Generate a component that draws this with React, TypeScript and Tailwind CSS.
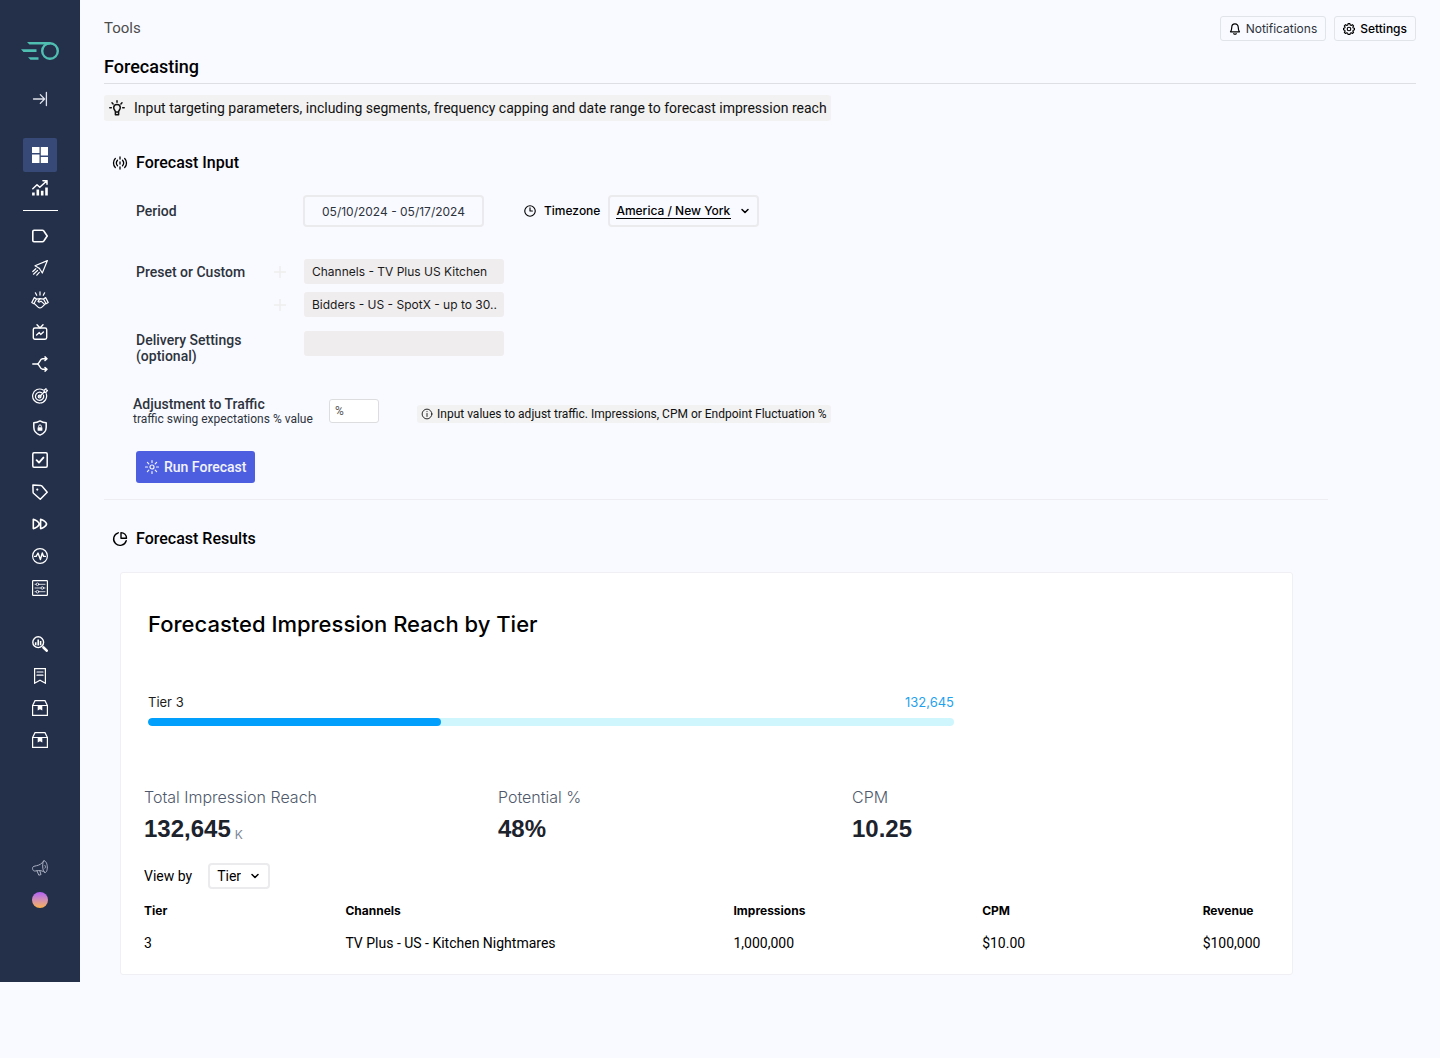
import { useState } from 'react'
import type { ReactNode } from 'react'
import { ChevronDown } from 'lucide-react'

function Icon({ size = 16, stroke = 1.2, children }: { size?: number; stroke?: number; children: ReactNode }) {
  return (
    <svg
      width={size}
      height={size}
      viewBox="0 0 16 16"
      fill="none"
      stroke="currentColor"
      strokeWidth={stroke}
      strokeLinecap="round"
      strokeLinejoin="round"
      aria-hidden="true"
      className="shrink-0"
    >
      {children}
    </svg>
  )
}

function BoxIcon() {
  return (
    <Icon>
      <path d="M.6 5.5v9.9h14.8V5.5H.6zM.6 5.5 3 .7h10l2.4 4.8" strokeLinejoin="miter" />
      <path d="M5.7 5.5h4.6v5L8 9.3l-2.3 1.2z" fill="currentColor" stroke="none" />
    </Icon>
  )
}

const mainItems = [
  {
    name: 'Labels',
    icon: (
      <Icon stroke={1.6}>
        <path d="M2 2.3h8.4c.6 0 1 .2 1.4.7L15.2 8l-3.4 5c-.4.5-.8.7-1.4.7H2c-.7 0-1.2-.5-1.2-1.2v-9c0-.7.5-1.2 1.2-1.2z" />
      </Icon>
    ),
  },
  {
    name: 'Campaigns',
    icon: (
      <Icon>
        <path d="M15.4.6 3 5.700l3.700 2.200c.6.3 1 .8 1.300 1.400l2.300 3.700zM3.800 8.700.8 11.500M5.500 10.500l-4 3.700M7.300 12.400l-2.500 2.800" />
      </Icon>
    ),
  },
  {
    name: 'Deals',
    icon: (
      <Icon size={18} stroke={1.1}>
        <path d="M8 .7v2.900M3.900 1.600l1.200 2.200M12.100 1.600l-1.200 2.200M3 5.900.7 10.200l1.800 1.100 2.400-4.200zM13 5.900l2.300 4.300-1.800 1.100-2.400-4.200zM4.900 7.200 8 6.700l3.100.5M3 11.200l3.300 3.100c1 .9 2.400.9 3.400 0l3.300-3.100M8 6.900 6.200 9.200c.8.9 1.800.6 2.700-.2l3 2.700" />
      </Icon>
    ),
  },
  {
    name: 'Channels',
    icon: (
      <Icon stroke={1.4}>
        <rect x="1.3" y="4" width="13.4" height="11.2" rx="1.6" />
        <path d="M5 .8 8 4l3-3.2M4.600 11l2.700-2.400 1.400 1.800 2.700-2.400" />
      </Icon>
    ),
  },
  {
    name: 'Routing',
    icon: (
      <Icon stroke={1.5}>
        <path d="M.8 8h4.4c2.6 0 2.4-5.3 5.4-5.3h4M5.2 8c2.6 0 2.4 5.3 5.4 5.3h4M13 .9l2 1.8-2 1.8M13 11.5l2 1.8-2 1.8" />
      </Icon>
    ),
  },
  {
    name: 'Targeting',
    icon: (
      <Icon>
        <path d="M11.2 2A7 7 0 1 0 14.2 5.6M9.7 4.8a4.1 4.1 0 1 0 1.8 2.3" />
        <circle cx="7.6" cy="8.6" r="1.4" />
        <path d="m7.7 8.5 5-5M12 4.1l.1-2L14 .6l.2 1.6 1.4.2L14 4.3z" />
      </Icon>
    ),
  },
  {
    name: 'Security',
    icon: (
      <Icon stroke={1.5}>
        <path d="M8 .9c1.9 1.2 4 1.8 6.2 1.9v4.4c0 3.700-2.600 6.500-6.200 7.900-3.600-1.400-6.200-4.200-6.200-7.900V2.800C4 2.700 6.100 2.100 8 .9z" />
        <rect x="5.6" y="7.2" width="4.8" height="3.5" rx=".5" fill="currentColor" stroke="none" />
        <path d="M6.700 7V6.200a1.300 1.300 0 0 1 2.600 0V7" strokeWidth="1" />
      </Icon>
    ),
  },
  {
    name: 'Approvals',
    icon: (
      <Icon stroke={1.5}>
        <rect x=".8" y=".8" width="14.4" height="14.4" rx="1.2" />
        <path d="m4.6 8.2 2.400 2.400 4.400-5" strokeWidth="1.9" />
      </Icon>
    ),
  },
  {
    name: 'Tags',
    icon: (
      <Icon stroke={1.5}>
        <path d="m.9 1 8 .5c.4 0 .7.2 1 .5L15.2 8.200 8.300 15.200 1.500 9.200c-.3-.3-.4-.5-.4-.9z" />
        <circle cx="5.3" cy="5.6" r="1.1" fill="currentColor" stroke="none" />
      </Icon>
    ),
  },
  {
    name: 'Pacing',
    icon: (
      <Icon stroke={1.6}>
        <path d="M1.300 3.400v9.200c2.500-.4 5.700-2.800 6-4.600-.3-1.800-3.500-4.200-6-4.600zM8.600 3.400v9.200c2.500-.4 5.700-2.800 6-4.600-.3-1.800-3.500-4.200-6-4.600z" />
      </Icon>
    ),
  },
  {
    name: 'Activity',
    icon: (
      <Icon>
        <circle cx="8" cy="8" r="7.4" />
        <path d="M2.600 8.400h1.600L6 5l2.400 6.500L10.300 5l1.300 3.400h1.800" strokeWidth="1.4" />
      </Icon>
    ),
  },
  {
    name: 'Controls',
    icon: (
      <Icon>
        <rect x=".6" y=".6" width="14.8" height="14.8" rx=".6" />
        <g strokeWidth=".8">
          <path d="M3 4.300h1M7 4.300h6M3 8h5.800M11.800 8H13M3 11.700h1M7 11.700h6" />
          <circle cx="5.5" cy="4.3" r="1.3" />
          <circle cx="10.3" cy="8" r="1.3" />
          <circle cx="5.5" cy="11.7" r="1.3" />
        </g>
      </Icon>
    ),
  },
]

const toolItems = [
  {
    name: 'Insights',
    icon: (
      <Icon stroke={1.4}>
        <circle cx="6.2" cy="6.2" r="5.4" />
        <path d="M3.700 6.200v3M6.200 3.600v6M8.600 5v4.200" strokeWidth="1.6" strokeLinecap="butt" />
        <path d="m11.500 11.500 3.200 3.200" strokeWidth="2.6" />
      </Icon>
    ),
  },
  {
    name: 'Bookmarks',
    icon: (
      <Icon>
        <path d="M2.600.6h10.800v14.600L8 12.200l-5.400 3z" strokeLinejoin="miter" />
        <path d="M5 4h6M5 7.200h6" />
      </Icon>
    ),
  },
  { name: 'Inventory', icon: <BoxIcon /> },
  { name: 'Packages', icon: <BoxIcon /> },
]

function NavLink({ name, children }: { name: string; children: ReactNode }) {
  return (
    <a href="#" aria-label={name} className="flex h-8 w-8 items-center justify-center">
      {children}
    </a>
  )
}

function Sidebar() {
  return (
    <nav aria-label="Main" className="flex w-20 shrink-0 flex-col items-center bg-[#242f4a] pt-[35px] pb-[66px] text-white">
      <a href="#" aria-label="Home" className="flex h-8 items-center text-[#4fbfb2]">
        <svg width="38" height="20" viewBox="0 0 38 20" fill="currentColor" aria-hidden="true">
          <circle cx="29" cy="10" r="7.8" fill="none" stroke="currentColor" strokeWidth="2.4" />
          <path d="M6 1h23v2.400H8.500zM0 8.300h15.500v2.600H2.500zM7 16.200h10.500v2.600h-8z" />
        </svg>
      </a>
      <button type="button" aria-label="Expand menu" className="mt-4 flex h-8 w-8 items-center justify-center text-[#dfe2ea]">
        <Icon stroke={1.3}>
          <path d="M1.500 8h11M8.300 3.600 12.600 8l-4.300 4.400M14.400 1.500v13" />
        </Icon>
      </button>

      <a
        href="#"
        aria-label="Dashboard"
        className="mt-[23px] flex h-[34px] w-[34px] items-center justify-center rounded-xs bg-[#364977]"
      >
        <svg width="16" height="16" viewBox="0 0 16 16" fill="currentColor" aria-hidden="true">
          <path d="M0 0h7.500v6H0zM0 7.500h7.500V16H0zM8.800 0H16v8.500H8.800zM8.800 10H16v6H8.800z" />
        </svg>
      </a>
      <NavLink name="Analytics">
        <Icon>
          <path d="m.8 8.700 4.200-4 2.800 2.600 6.600-6M11 .7h4v3.600" strokeWidth="1.5" />
          <path d="M1.400 12.600v3M5.800 9.600v6M10.200 10.800v4.800M14.500 7.400v8.200" strokeWidth="2.6" strokeLinecap="butt" />
        </Icon>
      </NavLink>
      <hr className="mt-1.5 mb-[9px] w-[35px] border-white" />

      {mainItems.map((item) => (
        <NavLink key={item.name} name={item.name}>
          {item.icon}
        </NavLink>
      ))}

      <div className="mt-6">
        {toolItems.map((item) => (
          <NavLink key={item.name} name={item.name}>
            {item.icon}
          </NavLink>
        ))}
      </div>

      <div className="mt-24 text-[#aab1c2]">
        <NavLink name="Announcements">
          <Icon stroke={1}>
            <path d="M11.800.9c1.500-.8 3.400 2.300 3.500 6 .1 3.600-1 6-2.400 5.500C11.500 11.900 10.600 9 10.700 6c0-2.500.3-4.600 1.100-5.100zM11.600 1.100C9.800 3.800 7.500 5.100 4.500 5.700L2 6.300C.6 6.700.3 8 .7 9.300c.3 1.300 1.200 1.900 2.500 1.700l3-.4c2.500-.2 4.800.4 6.700 1.800M5 10.900l1.800 4.300 2.200-.6-1.200-3.800M12.800 5.300c.9.600 1 2.200.2 2.900" />
          </Icon>
        </NavLink>
        <button type="button" aria-label="Account" className="flex h-8 w-8 items-center justify-center">
          <span className="h-4 w-4 rounded-full bg-linear-to-b from-[#b45cf5] to-[#fbb040]" />
        </button>
      </div>
    </nav>
  )
}

const inputFont = "font-['Inter',sans-serif] text-xs"

function AddButton({ label }: { label: string }) {
  return (
    <button type="button" aria-label={label} className="mr-[18px] text-[#eeeeee]">
      <Icon size={12} stroke={2}>
        <path d="M8 0v16M0 8h16" strokeLinecap="butt" />
      </Icon>
    </button>
  )
}

function ForecastForm() {
  const [period, setPeriod] = useState('05/10/2024 - 05/17/2024')
  const [traffic, setTraffic] = useState('')

  return (
    <form onSubmit={(e) => e.preventDefault()} className="pl-8 text-[#2d333d]">
      <div className="flex items-center">
        <label htmlFor="period" className="w-[167px] text-sm font-medium">
          Period
        </label>
        <input
          id="period"
          value={period}
          onChange={(e) => setPeriod(e.target.value)}
          className={`${inputFont} h-8 w-[181px] rounded-sm border-2 border-[#ebebed] text-center`}
        />
        <label htmlFor="timezone" className="ml-10 flex items-center gap-2 font-['Inter',sans-serif] text-xs font-medium text-black">
          <Icon size={12} stroke={1.5}>
            <circle cx="8" cy="8" r="7" />
            <path d="M8 3.800V8h3.200" />
          </Icon>
          Timezone
        </label>
        <div className="ml-2 flex h-8 items-center gap-2 rounded-sm border-2 border-[#ebebed] px-1.5 text-black">
          <select
            id="timezone"
            className="w-[115px] appearance-none border-b border-black font-['Inter',sans-serif] text-xs leading-[14px] font-medium"
          >
            <option>America / New York</option>
            <option>America / Chicago</option>
          </select>
          <ChevronDown size={12} strokeWidth={3} aria-hidden="true" />
        </div>
      </div>

      <div className="mt-8 flex items-center">
        <label htmlFor="preset" className="w-[138px] text-sm font-medium">
          Preset or Custom
        </label>
        <AddButton label="Add channel" />
        <input
          id="preset"
          defaultValue="Channels - TV Plus US Kitchen"
          className={`${inputFont} h-[25px] w-[200px] rounded-[3px] bg-[#f0edee] px-2 text-[#1a1a1a]`}
        />
      </div>
      <div className="mt-2 flex items-center pl-[138px]">
        <AddButton label="Add bidder" />
        <input
          aria-label="Bidders"
          defaultValue="Bidders - US - SpotX - up to 30.."
          className={`${inputFont} h-[25px] w-[200px] rounded-[3px] bg-[#f0edee] pl-2 text-[#1a1a1a]`}
        />
      </div>
      <div className="mt-[14px] flex">
        <label htmlFor="delivery" className="mt-px w-[168px] text-sm leading-4 font-medium">
          Delivery Settings
          <br />
          (optional)
        </label>
        <input id="delivery" className={`${inputFont} h-[25px] w-[200px] rounded-[3px] bg-[#f0edee] px-2`} />
      </div>

      <div className="-ml-[3px] mt-8 flex items-start">
        <label htmlFor="traffic" className="w-[196px]">
          <span className="block text-sm leading-4 font-medium">Adjustment to Traffic</span>
          <span className="block text-xs leading-[14px]">traffic swing expectations % value</span>
        </label>
        <input
          id="traffic"
          value={traffic}
          placeholder="%"
          onChange={(e) => setTraffic(e.target.value)}
          className="mt-[3px] h-6 w-[50px] rounded-[3px] border border-[#dddddf] bg-white px-[5px] text-xs placeholder:text-[#555555]"
        />
        <p className="mt-[9px] ml-[38px] flex h-[18px] items-center gap-1 rounded-[3px] bg-[#f2f2f2] px-1 text-xs text-[#111111]">
          <Icon size={12}>
            <circle cx="8" cy="8" r="6.5" />
            <path d="M8 7.300v4M8 4.700v.2" />
          </Icon>
          Input values to adjust traffic. Impressions, CPM or Endpoint Fluctuation %
        </p>
      </div>

      <button
        type="submit"
        className="mt-[25px] flex h-8 items-center gap-1 rounded-[3px] bg-[#4d5fe0] pr-[9px] pl-2 text-sm font-medium text-[#f3f3fb]"
      >
        <Icon stroke={1.2}>
          <circle cx="8" cy="8" r="2" />
          <path d="M8 1.500v2M8 12.500v2M1.500 8h2M12.500 8h2M3.400 3.400l1.400 1.400M11.200 11.200l1.400 1.400M3.400 12.600l1.400-1.400M11.200 4.800l1.400-1.400" />
        </Icon>
        Run Forecast
      </button>
    </form>
  )
}

const stats = [
  { label: 'Total Impression Reach', value: '132,645', unit: 'K' },
  { label: 'Potential %', value: '48%' },
  { label: 'CPM', value: '10.25' },
]

const rows = [
  { tier: '3', channels: 'TV Plus - US - Kitchen Nightmares', impressions: '1,000,000', cpm: '$10.00', revenue: '$100,000' },
]

function Results() {
  const progress = 36.4

  return (
    <section className="mt-[21px] mr-[123px] ml-4 rounded-[3px] border border-[#f0f0f4] bg-white px-[23px] pt-[35px] pb-[15px]">
      <h3 className="ml-1 font-['Inter',sans-serif] text-[22px] leading-8 font-medium text-black">
        Forecasted Impression Reach by Tier
      </h3>

      <div className="mt-[52px] ml-1 max-w-[806px] font-['Inter',sans-serif] text-[13px]">
        <div className="flex justify-between leading-5">
          <span className="text-[#1c1c1c]">Tier 3</span>
          <span className="text-[#1fa2ee]">132,645</span>
        </div>
        <div className="mt-1.5 h-2 overflow-hidden rounded-full bg-[#cff6fd]">
          <div className="h-full rounded-full bg-[#02a0fc]" style={{ width: `${progress}%` }} />
        </div>
      </div>

      <dl className="mt-[59px] grid max-w-[1062px] grid-cols-3">
        {stats.map((stat) => (
          <div key={stat.label}>
            <dt className="font-['Inter',sans-serif] text-base font-light text-[#4f596b]">{stat.label}</dt>
            <dd className="mt-1 flex items-center gap-1 font-['Liberation_Sans',sans-serif] text-2xl leading-8 font-bold text-[#1d232c]">
              {stat.value}
              {stat.unit && (
                <span className="pt-3 font-['Inter',sans-serif] text-xs leading-4 font-normal text-[#7d8696]">{stat.unit}</span>
              )}
            </dd>
          </div>
        ))}
      </dl>

      <div className="mt-[18px] flex items-center gap-4 text-sm text-black">
        <label htmlFor="view-by">View by</label>
        <div className="flex h-[26px] items-center gap-2 rounded-sm border-2 border-[#ebebed] px-[7px]">
          <select id="view-by" className="w-6 appearance-none">
            <option>Tier</option>
            <option>CPM</option>
          </select>
          <ChevronDown size={12} strokeWidth={3} aria-hidden="true" />
        </div>
      </div>

      <table className="mt-1.5 w-full table-fixed text-left text-black">
        <thead className="font-['Inter',sans-serif] text-xs">
          <tr className="h-8">
            <th className="w-[17.9%] font-bold">Tier</th>
            <th className="w-[34.5%] font-bold">Channels</th>
            <th className="w-[22.1%] font-bold">Impressions</th>
            <th className="w-[19.6%] font-bold">CPM</th>
            <th className="font-bold">Revenue</th>
          </tr>
        </thead>
        <tbody className="text-sm">
          {rows.map((row) => (
            <tr key={row.tier} className="h-8">
              <td className="p-0">{row.tier}</td>
              <td className="p-0">{row.channels}</td>
              <td className="p-0">{row.impressions}</td>
              <td className="p-0">{row.cpm}</td>
              <td className="p-0">{row.revenue}</td>
            </tr>
          ))}
        </tbody>
      </table>
    </section>
  )
}

export default function App() {
  return (
    <div className="flex min-h-screen items-start bg-[#f9faff] font-['Roboto',sans-serif]">
      <Sidebar />
      <main className="min-w-0 flex-1 px-6 pt-4">
        <header className="border-b border-[#dddfe5]">
          <div className="flex h-[25px] items-center justify-between">
            <a href="#" className="text-[15px] text-[#4c4c4c]">
              Tools
            </a>
            <div className="flex gap-2 font-['Inter',sans-serif] text-xs">
              <button type="button" className="flex h-[25px] items-center gap-[5px] rounded-[3px] border border-[#e1e4e9] px-2 text-[#2d333d]">
                <span className="text-black">
                  <Icon size={12} stroke={1.6}>
                    <path d="M8 1.200c-2.700 0-4.300 2-4.300 4.500 0 3.200-.7 4.600-1.700 6.100h12c-1-1.500-1.700-2.900-1.700-6.100C12.300 3.200 10.700 1.200 8 1.200zM6.300 14.200c.8 1.100 2.600 1.100 3.400 0" />
                  </Icon>
                </span>
                Notifications
              </button>
              <button type="button" className="flex h-[25px] items-center gap-[5px] rounded-[3px] border border-[#e1e4e9] px-2 font-medium text-black">
                <Icon size={12} stroke={1.5}>
                  <path d="m6.700.8-.4 1.900-1.200.5-1.700-1-1.600 1.700 1 1.600-.5 1.200-1.700.4v2l1.700.5.5 1.200-1 1.600 1.600 1.600 1.700-.9 1.200.5.4 1.700h2.500l.5-1.700 1.200-.5 1.600.9 1.600-1.600-1-1.600.6-1.200 1.700-.5v-2l-1.700-.4-.6-1.200 1-1.600-1.600-1.700-1.600 1-1.200-.5L9.200.8z" />
                  <circle cx="8" cy="8" r="2.400" />
                </Icon>
                Settings
              </button>
            </div>
          </div>
          <h1 className="mt-3 pb-[3px] text-lg leading-[27px] font-medium text-black">Forecasting</h1>
        </header>

        <p className="mt-[11px] flex h-[26px] w-fit items-center gap-[9px] rounded-[3px] bg-[#f2f2f2] pr-1 pl-[5px] text-sm text-[#111111]">
          <Icon stroke={1.5}>
            <path d="M8 4.600c-2 0-3.300 1.400-3.300 3.100 0 1.900 1.600 2.600 1.700 4.200v2.800h3.200v-2.800c.1-1.600 1.700-2.300 1.700-4.200 0-1.700-1.300-3.100-3.300-3.100zM6.400 12h3.200M8 .8v1.400M3 2.700l1.100 1.200M13 2.700l-1.100 1.200M.8 7.700h1.500M13.700 7.700h1.500" />
          </Icon>
          Input targeting parameters, including segments, frequency capping and date range to forecast impression reach
        </p>

        <h2 className="mt-[30px] mb-5 flex items-center gap-2 pl-2 text-base font-medium text-black">
          <Icon stroke={1.3}>
            <path d="M3.300 3.500c-2.400 2.400-2.400 6.600 0 9M5.500 5.300c-1.300 1.500-1.300 3.900 0 5.400M12.700 3.500c2.400 2.400 2.400 6.600 0 9M10.500 5.300c1.300 1.500 1.300 3.900 0 5.400M8 2v2M8 7v2M8 12v2" />
          </Icon>
          Forecast Input
        </h2>
        <ForecastForm />

        <hr className="mt-4 mr-[88px] border-[#ededf2]" />
        <h2 className="mt-[27px] flex items-center gap-2 pl-2 text-base font-medium text-black">
          <Icon stroke={1.4}>
            <path d="M6.300 1.800a6.400 6.400 0 1 0 7.900 7.900" />
            <path d="M9 1.600v5.700h5.500c0-3.100-2.400-5.500-5.500-5.700z" />
          </Icon>
          Forecast Results
        </h2>
        <Results />
      </main>
    </div>
  )
}
